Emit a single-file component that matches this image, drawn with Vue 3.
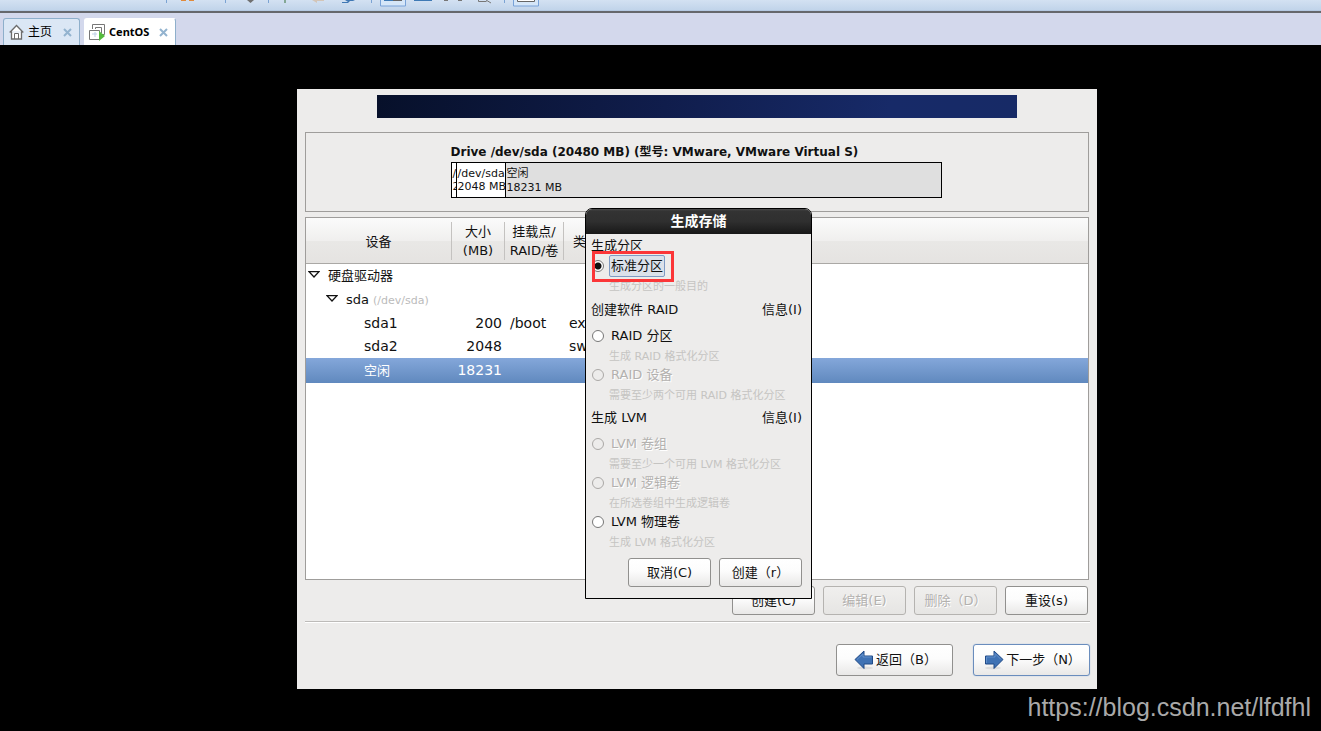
<script setup>
import { ref } from 'vue'

const target = ref('standard')

const rows = [
  { name: '硬盘驱动器', level: 0, open: true },
  { name: 'sda', note: '(/dev/sda)', level: 1, open: true },
  { name: 'sda1', level: 2, size: '200', mount: '/boot', type: 'ext4' },
  { name: 'sda2', level: 2, size: '2048', type: 'swap' },
  { name: '空闲', level: 2, size: '18231', selected: true },
]

const sections = [
  {
    title: '生成分区',
    options: [{ id: 'standard', label: '标准分区', hint: '生成分区的一般目的' }],
  },
  {
    title: '创建软件 RAID',
    info: true,
    options: [
      { id: 'raid-part', label: 'RAID 分区', hint: '生成 RAID 格式化分区' },
      { id: 'raid-dev', label: 'RAID 设备', hint: '需要至少两个可用 RAID 格式化分区', disabled: true },
    ],
  },
  {
    title: '生成 LVM',
    info: true,
    options: [
      { id: 'lvm-vg', label: 'LVM 卷组', hint: '需要至少一个可用 LVM 格式化分区', disabled: true },
      { id: 'lvm-lv', label: 'LVM 逻辑卷', hint: '在所选卷组中生成逻辑卷', disabled: true },
      { id: 'lvm-pv', label: 'LVM 物理卷', hint: '生成 LVM 格式化分区' },
    ],
  },
]
</script>

<template>
  <div class="page">
    <header class="toolbar">
      <svg class="tools" width="560" height="10" viewBox="0 0 560 10" aria-hidden="true">
        <g fill="#7ba3d3">
          <rect x="166" width="1" height="3" /><rect x="225" width="1" height="3" />
          <rect x="268" width="1" height="3" /><rect x="371" width="1" height="3" />
          <rect x="504" width="1" height="3" />
        </g>
        <path d="M181 0h5v1h-5zM189 0h5v1h-5z" fill="#e08a3c" />
        <path d="M247 0h7l-3.500 3z" fill="#707070" />
        <rect x="284" width="2" height="3" fill="#83a795" />
        <path d="M312 0h12v1h-7v2z" fill="#d3c5b8" />
        <path d="M342 2h6l-3-2h10l-2 1h-3l-2 2h-6z" fill="#4078b4" />
        <path d="M380.500 0v6h25v-6M513.500 0v6h25v-6" fill="#d5e6f8" stroke="#78a2d8" />
        <rect x="384" width="9" height="1" fill="#3f7ab5" />
        <rect x="393" width="9" height="1" fill="#666" />
        <rect x="414" width="18" height="1" fill="#3f7ab5" />
        <path d="M444 0h4v1h-4zM458 0h4v1h-4z" fill="#777" />
        <path d="M478.500 0v1.500h8M486 0l5 3" fill="none" stroke="#777" />
        <path d="M517.500 0v1.500h17v-1.500" fill="#fff" stroke="#666" />
      </svg>
    </header>

    <nav class="tabs">
      <div class="tab">
        <svg width="15" height="16" viewBox="0 0 15 16" aria-hidden="true">
          <path d="M.7 8.500 7.500 1.500 14.300 8.500M2.500 7.500v7.500h10V7.500" fill="#fff" stroke="#6c6c6c" stroke-width="1.300" />
          <path d="M5.500 15V9.500h4V15" fill="none" stroke="#6c6c6c" />
        </svg>
        <span class="tab-name">主页</span>
        <button class="tab-close" type="button" aria-label="关闭主页">
          <svg width="9" height="9" viewBox="0 0 9 9"><path d="M1 1l7 7M8 1l-7 7" stroke="#93b3cf" stroke-width="2" /></svg>
        </button>
      </div>
      <div class="tab active">
        <svg width="17" height="17" viewBox="0 0 17 17" aria-hidden="true">
          <path d="M3.500 5V.5h12v10H12M6.500 5V3.500h6V9" fill="none" stroke="#777" />
          <path d="M.5 6.500h10v9H.5z" fill="#fff" stroke="#777" />
          <path d="M3 10h5M6 8v5" stroke="#bccfe4" />
          <path d="M10 7l6 5-6 5z" fill="#55bb3c" />
        </svg>
        <span class="tab-name">CentOS</span>
        <button class="tab-close" type="button" aria-label="关闭 CentOS">
          <svg width="9" height="9" viewBox="0 0 9 9"><path d="M1 1l7 7M8 1l-7 7" stroke="#93b3cf" stroke-width="2" /></svg>
        </button>
      </div>
    </nav>

    <main class="screen">
      <section class="installer">
        <div class="banner"></div>

        <div class="drive">
          <div class="drive-inner">
            <div class="drive-title">Drive /dev/sda (20480 MB) (型号: VMware, VMware Virtual S)</div>
            <div class="bar">
              <div class="part tiny">/dev/sda1<br />200 MB</div>
              <div class="part swap">/dev/sda2<br />2048 MB</div>
              <div class="part free">空闲<br />18231 MB</div>
            </div>
          </div>
        </div>

        <div class="tree">
          <table>
            <colgroup>
              <col class="c-device" /><col class="c-size" /><col class="c-mount" /><col />
            </colgroup>
            <thead>
              <tr>
                <th><span>设备</span></th>
                <th><span>大小<br />(MB)</span></th>
                <th><span>挂载点/<br />RAID/卷</span></th>
                <th class="left"><span>类型</span></th>
              </tr>
            </thead>
            <tbody>
              <tr v-for="row in rows" :key="row.name" :class="{ selected: row.selected }">
                <td :class="'level' + row.level">
                  <svg v-if="row.open" width="12" height="7" viewBox="0 0 12 7" aria-hidden="true">
                    <path d="M1 .7h10L6 6z" fill="#fff" stroke="#111" stroke-width="1.300" />
                  </svg>
                  <span>{{ row.name }}</span>
                  <small v-if="row.note">{{ row.note }}</small>
                </td>
                <td class="num">{{ row.size }}</td>
                <td>{{ row.mount }}</td>
                <td>{{ row.type }}</td>
              </tr>
            </tbody>
          </table>
        </div>

        <div class="actions">
          <button class="btn" type="button">创建(C)</button>
          <button class="btn" type="button" disabled>编辑(E)</button>
          <button class="btn" type="button" disabled>删除（D）</button>
          <button class="btn" type="button">重设(s)</button>
        </div>

        <footer class="wizard">
          <button class="btn large" type="button">
            <svg width="20" height="20" viewBox="0 0 20 20" aria-hidden="true">
              <ellipse cx="11" cy="18" rx="8" ry="1.500" fill="#ddd" />
              <path d="M1 9.500 10 1v5h8.500v8H10v4.500z" fill="#3f72b4" stroke="#204a87" />
              <path d="M3 9.500 9 4v3h8.500" fill="none" stroke="#6390cb" />
            </svg>返回（B）
          </button>
          <button class="btn large primary" type="button">
            <svg width="20" height="20" viewBox="0 0 20 20" aria-hidden="true">
              <ellipse cx="9" cy="18" rx="8" ry="1.500" fill="#ddd" />
              <path d="M19 9.500 10 1v5H1.500v8H10v4.500z" fill="#3f72b4" stroke="#204a87" />
              <path d="M2.500 13V7H11V3.500l6 6" fill="none" stroke="#6390cb" />
            </svg>下一步（N）
          </button>
        </footer>

        <form class="dialog" role="dialog" aria-label="生成存储" @submit.prevent>
          <h1>生成存储</h1>
          <div class="dialog-body">
            <fieldset v-for="s in sections" :key="s.title">
              <div class="group-head" :class="{ roomy: s.info }">
                <span>{{ s.title }}</span>
                <button v-if="s.info" class="info" type="button">信息(I)</button>
              </div>
              <template v-for="o in s.options" :key="o.id">
                <label class="option" :class="{ off: o.disabled, focused: o.id === target }">
                  <input v-model="target" type="radio" name="target" :value="o.id" :disabled="o.disabled" />
                  <span>{{ o.label }}</span>
                </label>
                <p class="hint">{{ o.hint }}</p>
              </template>
            </fieldset>
            <div class="dialog-actions">
              <button class="btn" type="button">取消(C)</button>
              <button class="btn" type="submit">创建（r）</button>
            </div>
          </div>
          <div class="marker"></div>
        </form>
      </section>
      <a class="watermark" href="https://blog.csdn.net/lfdfhl">https://blog.csdn.net/lfdfhl</a>
    </main>
  </div>
</template>

<style>
body {
  background: #000;
}
</style>

<style scoped>
.page {
  display: flex;
  flex-direction: column;
  min-height: 100vh;
  font: 13px/18px "DejaVu Sans", "Noto Sans CJK SC", sans-serif;
  color: #111;
}
.page * {
  box-sizing: border-box;
}
button {
  font: inherit;
  color: inherit;
  cursor: pointer;
}
svg {
  display: block;
  flex: none;
}
.toolbar {
  height: 13px;
  overflow: hidden;
  background: linear-gradient(#d3e1f2, #c1d4ea 10px, #a9bfdb 11px);
  border-bottom: 2px solid #65676c;
}
.tabs {
  display: flex;
  align-items: flex-end;
  gap: 4px;
  height: 32px;
  padding-left: 3px;
  background: #d3d8ec;
}
.tab {
  display: flex;
  align-items: center;
  height: 27px;
  padding: 0 6px 0 5px;
  border: 1px solid #8eafcb;
  border-bottom: 0;
  border-radius: 3px 3px 0 0;
  background: #dbe7f5;
  font-size: 12px;
}
.tab.active {
  padding-left: 4px;
  background: #fff;
  border-color: #fff #8eafcb #fff #fff;
  font: bold 11px/18px "Noto Sans", "Open Sans", sans-serif;
}
.tab-name {
  margin: 0 10px 0 4px;
  color: #000;
}
.active .tab-name {
  margin: 0 9px 0 3px;
}
.tab-close {
  padding: 1px;
  border: 0;
  background: none;
}
.screen {
  position: relative;
  flex: 1;
  display: flex;
  padding: 44px 224px 42px 297px;
  background: #000;
}
.installer {
  position: relative;
  flex: 1;
  display: flex;
  flex-direction: column;
  padding: 6px 8px 13px;
  background: #edeceb;
}
.banner {
  height: 23px;
  margin: 0 72px 14px;
  background: linear-gradient(100deg, #07102a, #101d4c 45%, #172a68 80%, #172a66);
}
.drive {
  height: 80px;
  margin-bottom: 5px;
  padding: 10px 2px 0 0;
  border: 1px solid #9f9d9b;
}
.drive-inner {
  width: 491px;
  margin: 0 auto;
}
.drive-title {
  height: 19px;
  font-size: 12px;
  font-weight: bold;
  white-space: nowrap;
}
.bar {
  display: flex;
  height: 36px;
  border: 1px solid #000;
  background: #fff;
}
.part {
  overflow: hidden;
  padding: 4px 0 0 1px;
  font-size: 11px;
  line-height: 13px;
  white-space: nowrap;
}
.tiny {
  width: 5px;
  border-right: 1px solid #000;
}
.swap {
  width: 49px;
  border-right: 1px solid #000;
}
.free {
  flex: 1;
  background: #dfdfdf;
  line-height: 14px;
}
.tree {
  flex: 1;
  border: 1px solid #9f9d9b;
  background: #fff;
}
table {
  width: 100%;
  table-layout: fixed;
  border-collapse: collapse;
}
.c-device {
  width: 146px;
}
.c-size {
  width: 53px;
}
.c-mount {
  width: 59px;
}
thead tr {
  height: 45px;
  background: linear-gradient(#fbfbfb, #f0efee 50%, #e9e8e6 51%, #e5e3e1);
  border-bottom: 1px solid #aaa8a5;
}
th {
  padding: 4px 0 3px;
  font-weight: normal;
  line-height: 19px;
  white-space: nowrap;
}
th span {
  display: grid;
  align-items: center;
  min-height: 38px;
  border-right: 1px solid #c4c2c0;
}
th.left span {
  padding-left: 9px;
  text-align: left;
  border-right: 0;
}
td {
  height: 23px;
  padding: 0 3px 0 5px;
  font-size: 14px;
  line-height: 23px;
  white-space: nowrap;
}
td.level0,
tr.selected td:first-child {
  font-size: 13px;
}
td svg {
  display: inline-block;
  margin-right: 8px;
  vertical-align: 2px;
}
td.level0 {
  height: 24px;
  padding-left: 2px;
}
td.level1 {
  height: 24px;
  padding-left: 20px;
  font-size: 13px;
}
td.level2 {
  padding-left: 58px;
}
td small {
  margin-left: 4px;
  font-size: 11px;
  color: #bbb;
}
td.num {
  text-align: right;
}
tr.selected {
  height: 25px;
  background: linear-gradient(#84a7da, #6089be);
  color: #fff;
}
.btn {
  display: flex;
  align-items: center;
  justify-content: center;
  width: 83px;
  height: 29px;
  padding: 0;
  border: 1px solid #91908e;
  border-radius: 3px;
  background: linear-gradient(#fff, #fcfcfc 45%, #e9e8e7);
  white-space: nowrap;
}
.btn:disabled {
  border-color: #b5b3b0;
  background: linear-gradient(#f0efee, #e6e5e3);
  color: #b3b1af;
  text-shadow: 1px 1px #fff;
}
.actions {
  display: flex;
  justify-content: flex-end;
  gap: 8px;
  padding: 6px 1px 6px 0;
}
.wizard {
  display: flex;
  justify-content: flex-end;
  gap: 20px;
  margin-right: -1px;
  padding-top: 22px;
  border-top: 1px solid #bdbbb9;
  box-shadow: inset 0 1px #fff;
}
.large {
  width: 117px;
  height: 32px;
  padding-left: 2px;
  gap: 2px;
}
.primary {
  border-color: #6a8dbd;
  box-shadow: 0 0 1px #7fa4d4;
}
.dialog {
  position: absolute;
  left: 288px;
  top: 119px;
  width: 227px;
  border: 1px solid #000;
  border-radius: 7px 7px 0 0;
  background: #edeceb;
}
h1 {
  height: 25px;
  margin: 0;
  border-radius: 6px 6px 0 0;
  background: linear-gradient(#4c4c4c, #333 2px, #2f2f2f 50%, #181818);
  color: #fff;
  font-size: 14px;
  line-height: 24px;
  text-align: center;
}
.dialog-body {
  padding: 1px 9px 11px 5px;
}
fieldset {
  min-width: 0;
  margin: 0;
  padding: 0;
  border: 0;
}
fieldset:first-child {
  margin-bottom: 1px;
}
.group-head {
  display: flex;
  align-items: center;
  justify-content: space-between;
  height: 21px;
}
.group-head.roomy {
  height: 28px;
  margin-bottom: 2px;
}
.info {
  padding: 0;
  border: 0;
  background: none;
}
.option {
  display: flex;
  align-items: center;
  gap: 5px;
  height: 20px;
}
.option span {
  padding: 1px;
  border: 1px solid transparent;
  border-radius: 2px;
}
.option.focused span {
  border-color: #7f9bc4;
  background: #dbe1ea;
}
.off {
  color: #b3b1af;
  text-shadow: 1px 1px #fff;
}
input {
  appearance: none;
  flex: none;
  width: 12px;
  height: 12px;
  margin: 0 0 0 1px;
  border: 1px solid #777;
  border-radius: 50%;
  background: #fff;
}
input:checked {
  background: radial-gradient(circle, #111 3px, #fff 4px);
}
input:disabled {
  border-color: #aaa8a6;
  background: #edeceb;
}
.hint {
  height: 19px;
  margin: 0;
  padding-left: 18px;
  color: #c5c4c2;
  font-size: 11px;
  line-height: 21px;
  white-space: nowrap;
}
.dialog-actions {
  display: flex;
  justify-content: flex-end;
  gap: 8px;
  padding-top: 7px;
}
.marker {
  position: absolute;
  left: 6px;
  top: 42px;
  width: 82px;
  height: 31px;
  border: 3px solid #fb3638;
  pointer-events: none;
}
.watermark {
  position: absolute;
  right: 10px;
  bottom: 9px;
  font: 25px/30px "Liberation Sans", Arial, sans-serif;
  color: #a9a9a9;
  text-decoration: none;
}
</style>
